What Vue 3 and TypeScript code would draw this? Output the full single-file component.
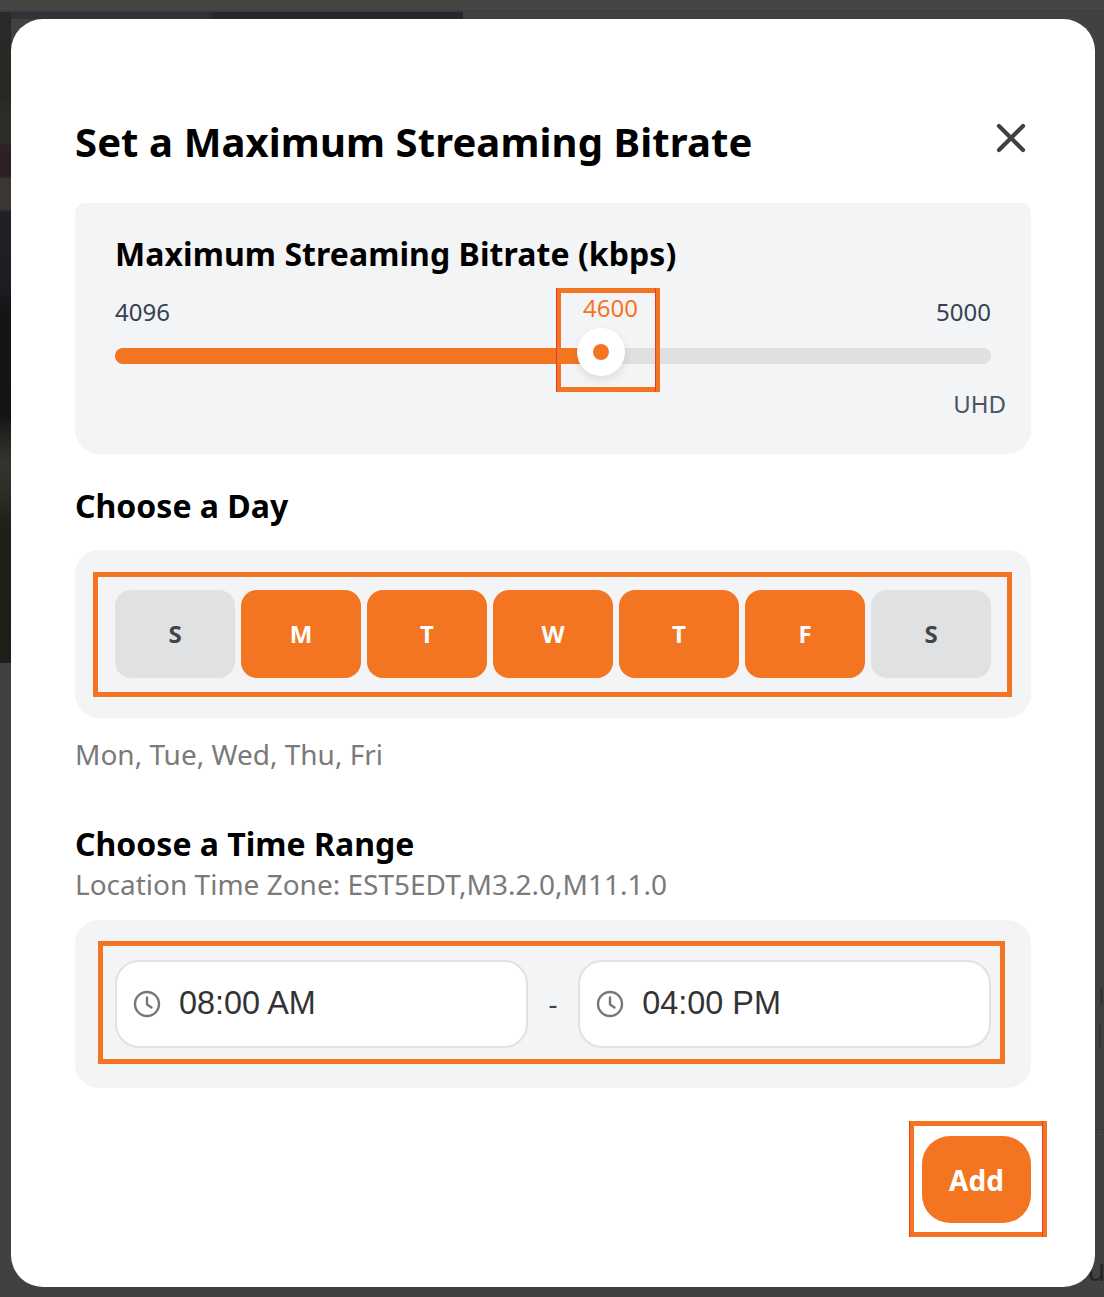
<script setup lang="ts">
interface Day { letter: string; on: boolean }
const days: Day[] = [
  { letter: 'S', on: false },
  { letter: 'M', on: true },
  { letter: 'T', on: true },
  { letter: 'W', on: true },
  { letter: 'T', on: true },
  { letter: 'F', on: true },
  { letter: 'S', on: false },
]
const times: string[] = ['08:00 AM', '04:00 PM']
</script>

<template>
  <div class="page">
    <div class="strip-top"></div>
    <div class="strip-image"></div>
    <div class="strip-left"></div>
    <span class="ghost-u">u</span>
    <div class="ghost-stroke ghost-t"></div>
    <div class="ghost-stroke ghost-l"></div>
    <div class="ghost-dots"></div>
    <section class="modal">
      <header class="head">
        <h1 class="title">Set a Maximum Streaming Bitrate</h1>
        <button class="close" aria-label="Close">
          <svg width="32" height="32" viewBox="0 0 32 32" fill="none" stroke="#404040" stroke-width="4.2" stroke-linecap="round">
            <path d="M4 4 28 28M28 4 4 28" />
          </svg>
        </button>
      </header>

      <div class="panel slider-panel">
        <h2 class="panel-title">Maximum Streaming Bitrate (kbps)</h2>
        <div class="scale">
          <span>4096</span>
          <span class="current">4600</span>
          <span>5000</span>
        </div>
        <div class="track">
          <div class="fill"></div>
          <div class="thumb"><div class="dot"></div></div>
        </div>
        <div class="tier">UHD</div>
        <div class="mark mark-slider"></div>
      </div>

      <h2 class="section-title day-title">Choose a Day</h2>
      <div class="panel days">
        <div v-for="(d, i) in days" :key="i" class="day" :class="{ on: d.on }">{{ d.letter }}</div>
        <div class="mark mark-days"></div>
      </div>
      <p class="hint day-hint">Mon, Tue, Wed, Thu, Fri</p>

      <h2 class="section-title time-title">Choose a Time Range</h2>
      <p class="hint zone">Location Time Zone: EST5EDT,M3.2.0,M11.1.0</p>
      <div class="panel times">
        <template v-for="(t, i) in times" :key="t">
          <span v-if="i === 1" class="dash">-</span>
          <div class="time">
            <svg width="28" height="28" viewBox="0 0 28 28" fill="none" stroke="#767676" stroke-width="2.4" stroke-linecap="round" stroke-linejoin="round">
              <circle cx="14" cy="14" r="12" />
              <path d="M14 7.5V14.5L18.5 17.5" />
            </svg>
            <span class="time-text">{{ t }}</span>
          </div>
        </template>
        <div class="mark mark-times"></div>
      </div>

      <footer class="foot">
        <button class="add">Add</button>
        <div class="mark mark-add"></div>
      </footer>
    </section>
  </div>
</template>

<style>
html, body { margin: 0; padding: 0; background: #414141; }
</style>

<style scoped>
* { box-sizing: border-box; }
.page {
  position: relative;
  width: 1104px;
  height: 1297px;
  overflow: hidden;
  background: #414141;
  padding: 19px 9px 10px 11px;
  font-family: "Noto Sans", sans-serif;
}
.strip-top { position: absolute; left: 0; top: 0; width: 100%; height: 12px; background: #454545; border-bottom: 2px solid #3e3e3e; }
.strip-image { position: absolute; left: 0; top: 12px; width: 463px; height: 7px; background: linear-gradient(90deg, #30343a 0, #30343a 45%, #25282e 46%, #25282e 100%); }
.strip-left {
  position: absolute; left: 0; top: 12px; width: 11px; height: 651px;
  background: linear-gradient(180deg,
    #2a2a28 0, #282724 85px, #2a2c28 95px, #2b2d29 130px,
    #2e2025 134px, #2c1f24 164px, #3a3735 167px, #3a3735 197px,
    #1f2126 200px, #1c1e22 270px, #151517 300px, #141416 405px,
    #1f1e1a 415px, #35332f 450px, #2e2d28 480px, #20201a 510px, #1e1e18 651px);
}
.ghost-u {
  position: absolute;
  left: 1087px;
  top: 1255px;
  font-size: 30px;
  line-height: 1;
  color: #262626;
}
.ghost-stroke { position: absolute; background: #353535; }
.ghost-t { left: 1100px; top: 988px; width: 3px; height: 17px; }
.ghost-l { left: 1099px; top: 1025px; width: 2px; height: 22px; }
.ghost-dots {
  position: absolute;
  left: 1095px;
  top: 1129px;
  width: 9px;
  border-top: 1px dashed #333;
}
.modal {
  position: relative;
  width: 1084px;
  height: 1268px;
  background: #fff;
  border-radius: 32px;
  padding: 0 64px;
}
.head {
  height: 184px;
  display: flex;
  justify-content: space-between;
  padding-top: 95px;
}
.title {
  margin: 0;
  font-size: 40px;
  line-height: 56px;
  font-weight: 700;
  letter-spacing: 0.1px;
  color: #000;
}
.close {
  border: 0;
  background: none;
  padding: 0;
  width: 32px;
  height: 32px;
  margin-right: 4px;
  margin-top: 8px;
}
.panel {
  position: relative;
  width: 956px;
  background: #f3f4f6;
  border-radius: 24px;
}
.slider-panel {
  height: 251px;
  padding: 27px 40px 0;
  border-top-left-radius: 10px;
  border-top-right-radius: 10px;
}
.panel-title {
  margin: 0;
  font-size: 32px;
  line-height: 48px;
  font-weight: 700;
  letter-spacing: 0.06px;
  color: #000;
}
.scale {
  position: relative;
  height: 44px;
  margin-top: 11px;
  display: flex;
  justify-content: space-between;
  align-items: center;
  font-size: 24px;
  color: #374151;
}
.current {
  position: absolute;
  left: 468px;
  top: 2px;
  color: #f47521;
}
.track {
  position: relative;
  width: 876px;
  height: 16px;
  margin-top: 15px;
  background: #dfe0e2;
  border-radius: 8px;
}
.fill {
  width: 486px;
  height: 100%;
  background: #f47521;
  border-radius: 8px 0 0 8px;
}
.thumb {
  position: absolute;
  left: 462px;
  top: -20px;
  width: 48px;
  height: 48px;
  border-radius: 50%;
  background: #fff;
  box-shadow: 0 4px 8px rgba(0, 0, 0, 0.1);
  display: flex;
  align-items: center;
  justify-content: center;
}
.dot { width: 16px; height: 16px; border-radius: 50%; background: #f47521; }
.tier {
  margin-top: 22px;
  margin-right: -15px;
  text-align: right;
  font-size: 24px;
  line-height: 36px;
  color: #4b5563;
}
.section-title {
  margin: 0;
  font-size: 32px;
  line-height: 44px;
  font-weight: 700;
  color: #000;
}
.day-title { margin-top: 30px; }
.days {
  margin-top: 22px;
  height: 168px;
  padding: 40px;
  display: flex;
  gap: 6px;
}
.day {
  width: 120px;
  height: 88px;
  padding-bottom: 2px;
  border-radius: 16px;
  background: #e0e1e3;
  color: #414449;
  font-size: 24px;
  font-weight: 700;
  display: flex;
  align-items: center;
  justify-content: center;
}
.day.on { background: #f47521; color: #fff; }
.hint {
  margin: 0;
  font-size: 28px;
  line-height: 40px;
  color: #7a7a7a;
}
.day-hint { margin-top: 16px; }
.time-title { margin-top: 48px; }
.zone { margin-top: -2px; }
.times {
  margin-top: 16px;
  height: 168px;
  padding: 40px;
  display: flex;
  align-items: center;
}
.time {
  flex: 1;
  height: 88px;
  display: flex;
  align-items: center;
  gap: 18px;
  padding-left: 16px;
  background: #fff;
  border: 2px solid #e0e1e3;
  border-radius: 24px;
}
.time-text {
  font-family: "Liberation Sans", Arial, sans-serif;
  font-size: 32.4px;
  line-height: 44px;
  color: #333;
  padding-bottom: 2px;
}
.dash {
  width: 50.5px;
  text-align: center;
  font-size: 28px;
  color: #374151;
  padding-bottom: 2px;
}
.foot {
  position: relative;
  display: flex;
  justify-content: flex-end;
  margin-top: 48px;
}
.add {
  width: 109px;
  height: 87px;
  border: 0;
  padding: 1px 0 0;
  border-radius: 28px;
  background: #f47521;
  color: #fff;
  font-family: "Noto Sans", sans-serif;
  font-size: 28px;
  font-weight: 700;
}
.mark {
  position: absolute;
  border: 5px solid #f47521;
  pointer-events: none;
}
.mark-slider { left: 481px; top: 85px; width: 104px; height: 104px; }
.mark-days { left: 18px; top: 22px; width: 919px; height: 125px; }
.mark-times { left: 23px; top: 21px; width: 907px; height: 123px; }
.mark-add { right: -16px; top: -15px; width: 138px; height: 116px; }
.mark-slider::before,
.mark-add::before,
.mark-slider::after,
.mark-add::after {
  content: "";
  position: absolute;
  top: -5px;
  bottom: -5px;
  width: 1px;
  background: #ea3a2c;
}
.mark-slider::before,
.mark-add::before { left: -5px; }
.mark-slider::after,
.mark-add::after { right: -1px; }
</style>
